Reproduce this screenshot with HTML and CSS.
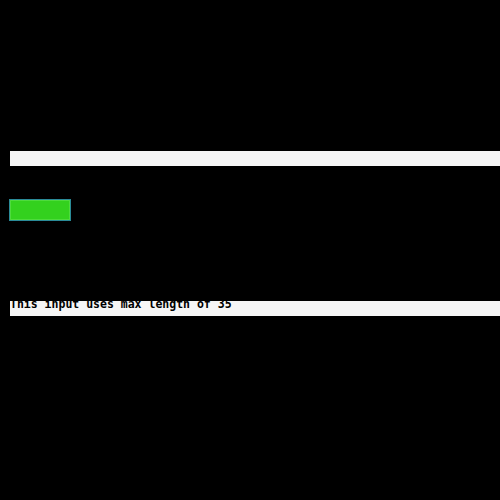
FILE: index.html
```html
<!DOCTYPE html>
<html>
<head>
<meta charset="utf-8">
<link rel="stylesheet" href="styles.css">
</head>
<body>
<div class="page">
  <div class="bar bar-top"></div>
  <button class="go" type="button"></button>
  <div class="bar bar-text"><span class="label">This input uses max length of 35</span></div>
</div>
</body>
</html>
```
FILE: styles.css
```css
html, body {
  margin: 0;
  padding: 0;
  background: #000;
  width: 500px;
  height: 500px;
  overflow: hidden;
}
.page {
  display: flex;
  flex-direction: column;
  align-items: flex-start;
  padding: 151px 0 0 10px;
}
.bar {
  width: 490px;
  height: 15px;
  background: #f6f6f6;
}
.go {
  display: block;
  margin: 33px 0 0 -1px;
  width: 62px;
  height: 22px;
  padding: 0;
  background: #33d11e;
  border: 1px solid #2a8a98;
  box-shadow: inset 0 0 0 1px #4edc3c;
  border-radius: 0;
}
.bar-text {
  margin-top: 80px;
  height: 15px;
}
.label {
  display: block;
  margin-top: -3px;
  font-family: "DejaVu Sans Mono", "Liberation Mono", monospace;
  font-weight: bold;
  font-size: 11.5px;
  line-height: 12px;
  color: #000;
  white-space: nowrap;
}
```
